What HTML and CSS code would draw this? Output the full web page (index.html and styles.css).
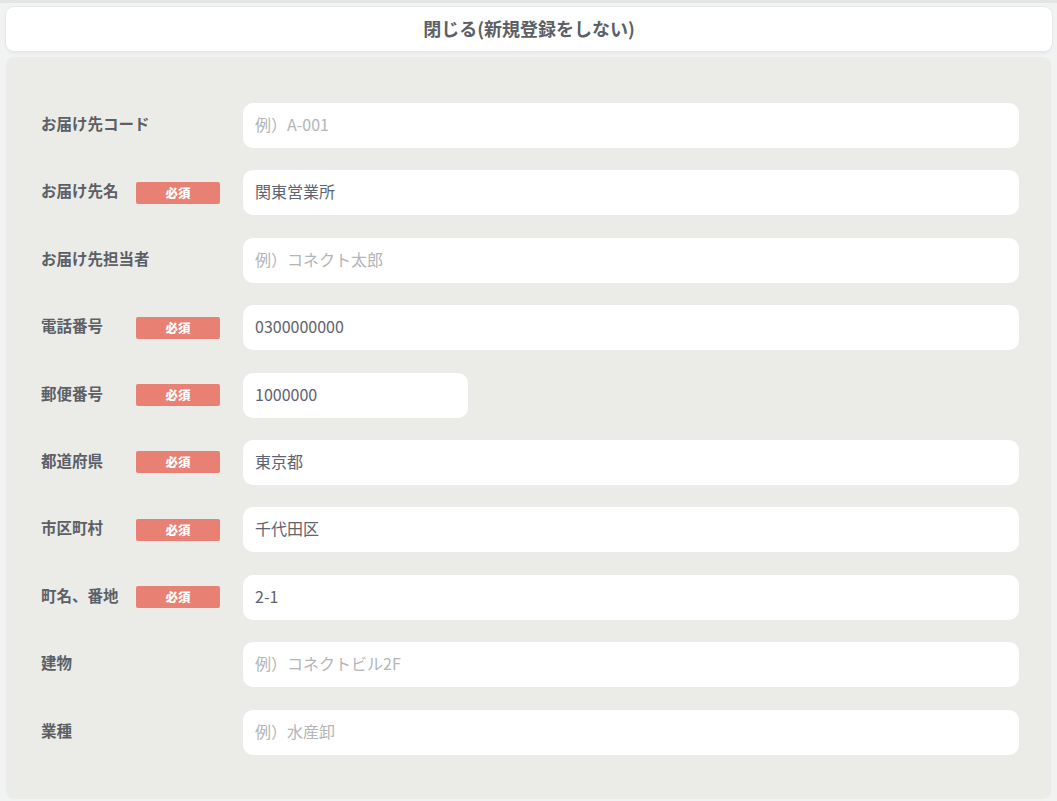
FILE: index.html
```html
<!DOCTYPE html>
<html lang="ja">
<head>
    <meta charset="UTF-8">
    <meta name="viewport" content="width=device-width, initial-scale=1.0">
    <title>お届け先登録</title>
    <link rel="stylesheet" href="styles.css">
</head>
<body>

    <button class="close-btn" type="button">閉じる(新規登録をしない)</button>

    <div class="form-panel">
        <div class="form-row">
            <div class="label-cell"><span class="label-text">お届け先コード</span></div>
            <input class="field" type="text" placeholder="例）A-001">
        </div>
        <div class="form-row">
            <div class="label-cell"><span class="label-text">お届け先名</span><span class="badge">必須</span></div>
            <input class="field" type="text" value="関東営業所">
        </div>
        <div class="form-row">
            <div class="label-cell"><span class="label-text">お届け先担当者</span></div>
            <input class="field" type="text" placeholder="例）コネクト太郎">
        </div>
        <div class="form-row">
            <div class="label-cell"><span class="label-text">電話番号</span><span class="badge">必須</span></div>
            <input class="field" type="text" value="0300000000">
        </div>
        <div class="form-row">
            <div class="label-cell"><span class="label-text">郵便番号</span><span class="badge">必須</span></div>
            <input class="field field-short" type="text" value="1000000">
        </div>
        <div class="form-row">
            <div class="label-cell"><span class="label-text">都道府県</span><span class="badge">必須</span></div>
            <input class="field" type="text" value="東京都">
        </div>
        <div class="form-row">
            <div class="label-cell"><span class="label-text">市区町村</span><span class="badge">必須</span></div>
            <input class="field" type="text" value="千代田区">
        </div>
        <div class="form-row">
            <div class="label-cell"><span class="label-text">町名、番地</span><span class="badge">必須</span></div>
            <input class="field" type="text" value="2-1">
        </div>
        <div class="form-row">
            <div class="label-cell"><span class="label-text">建物</span></div>
            <input class="field" type="text" placeholder="例）コネクトビル2F">
        </div>
        <div class="form-row">
            <div class="label-cell"><span class="label-text">業種</span></div>
            <input class="field" type="text" placeholder="例）水産卸">
        </div>
    </div>

</body>
</html>
```

FILE: styles.css
```css
body {
    font-family: "Noto Sans CJK JP", "Noto Sans", sans-serif;
    margin: 0;
    padding: 4px 5px 2px 6px;
    background-color: #f1f3f2;
    border-top: 3px solid #e3e5e4;
    color: #5c5f66;
}

.close-btn {
    display: block;
    width: 100%;
    height: 44px;
    margin: 0;
    padding: 0 0 3px;
    border: none;
    border-radius: 8px;
    background-color: #ffffff;
    box-shadow: 0 0 0 1px #e4e7eb, 0 2px 3px rgba(0, 0, 0, 0.06);
    font-family: inherit;
    font-size: 18px;
    font-weight: bold;
    color: #5c5f66;
    cursor: pointer;
}

.form-panel {
    margin-top: 6px;
    margin-right: 1px;
    padding: 46px 32px 44px 29px;
    background-color: #ebece8;
    border-radius: 8px;
    display: flex;
    flex-direction: column;
    gap: 22.4px;
}

.form-row {
    display: flex;
    align-items: center;
    height: 45px;
}

.label-cell {
    width: 202px;
    flex-shrink: 0;
    display: flex;
    align-items: center;
    padding-left: 6px;
}

.label-text {
    width: 95px;
    padding-bottom: 5px;
    font-size: 15.5px;
    font-weight: bold;
    white-space: nowrap;
}

.badge {
    display: inline-block;
    width: 84px;
    height: 22px;
    line-height: 22px;
    text-align: center;
    background-color: #e88074;
    border-radius: 2px;
    color: #ffffff;
    font-family: "Noto Sans CJK JP", sans-serif;
    font-size: 12.5px;
    font-weight: 900;
}

.field {
    flex: 1;
    height: 45px;
    box-sizing: border-box;
    padding: 0 12px 3px;
    border: none;
    border-radius: 10px;
    background-color: #ffffff;
    font-family: inherit;
    font-size: 16px;
    color: #5e6370;
    outline: none;
}

.field::placeholder {
    color: #b3b5b8;
}

.field-short {
    flex: none;
    width: 225px;
}
```
